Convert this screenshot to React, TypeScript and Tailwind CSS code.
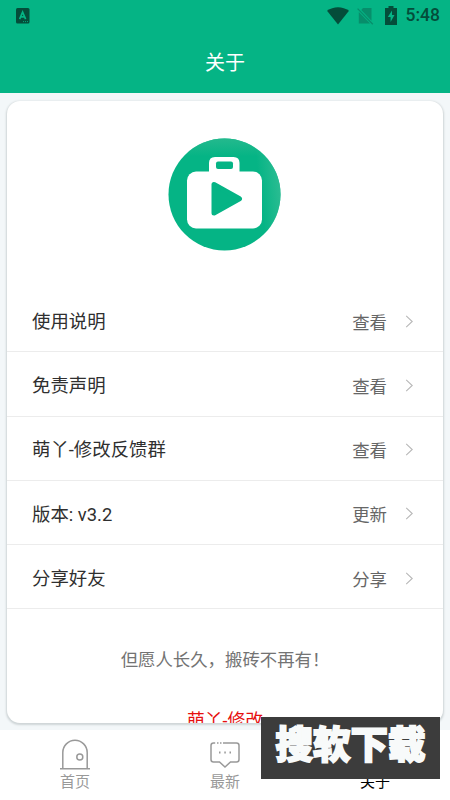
import type { ReactNode } from 'react'

type Row = { label: string; action: string }

const rows: Row[] = [
  { label: '使用说明', action: '查看' },
  { label: '免责声明', action: '查看' },
  { label: '萌丫-修改反馈群', action: '查看' },
  { label: '版本: v3.2', action: '更新' },
  { label: '分享好友', action: '分享' },
]

function StatusBar() {
  return (
    <div className="flex h-[31px] items-center pl-4 pr-[10px] text-[#044d3a]">
      <svg width="14" height="16" viewBox="0 0 14 16" className="mr-auto">
        <rect width="13.5" height="15.5" rx="1.5" fill="currentColor" />
        <path d="M3.6 11.2 6.6 4.2 9.6 11.2M4.8 8.8h3.6" fill="none" stroke="#05b485" strokeWidth="1.7" />
        <path d="M7 13.6h6" stroke="#05b485" strokeWidth="0.9" strokeDasharray="1 1" />
      </svg>
      <svg width="22" height="18" viewBox="0 0 22 18">
        <path d="M0 3.7C6.5-1 15.5-1 22 3.7L11 17.5z" fill="currentColor" />
      </svg>
      <svg width="17" height="18" viewBox="0 0 17 18" className="ml-2 text-[#078e6b]">
        <path d="M6 1h8.5v12.7L4.3 3zM1.8 5 13 16.5H1.8z" fill="currentColor" />
        <path d="M.6 1.6 15.8 17.2" stroke="currentColor" strokeWidth="1.3" />
      </svg>
      <svg width="12" height="19" viewBox="0 0 12 19" className="ml-[11px]">
        <path d="M3.5 0h5v2H12v17H0V2h3.5z" fill="currentColor" />
        <path d="M7 4.5 2.8 11h2.8v5L9.5 9H7z" fill="#05b485" />
      </svg>
      <span className="ml-[9px] font-[Roboto,sans-serif] text-[17.5px] font-medium leading-none">5:48</span>
    </div>
  )
}

function Logo() {
  return (
    <svg width="113" height="113" viewBox="0 0 113 113">
      <defs>
        <linearGradient id="right" x1="0.82" y1="0.5" x2="1" y2="0.48">
          <stop offset="0" stopColor="#2ebd93" stopOpacity="0" />
          <stop offset="1" stopColor="#2ebd93" stopOpacity="0.9" />
        </linearGradient>
        <linearGradient id="top" x1="0.5" y1="0" x2="0.5" y2="0.16">
          <stop offset="0" stopColor="#24b98d" />
          <stop offset="1" stopColor="#24b98d" stopOpacity="0" />
        </linearGradient>
      </defs>
      <circle cx="56.5" cy="56.5" r="56" fill="#05b485" />
      <circle cx="56.5" cy="56.5" r="56" fill="url(#right)" />
      <circle cx="56.5" cy="56.5" r="56" fill="url(#top)" />
      <rect x="19" y="33.5" width="75" height="57" rx="9" fill="#fff" />
      <path d="M41 36V25q0-6 6-6h18.5q6 0 6 6v11z" fill="#fff" />
      <rect x="48" y="23.5" width="17" height="7.5" rx="2" fill="#05b485" />
      <path d="M46 46.5v28.5L71.5 60.7z" fill="#05b485" stroke="#05b485" strokeWidth="5" strokeLinejoin="round" />
    </svg>
  )
}

function ListRow({ label, action }: Row) {
  return (
    <div className="flex h-[64.25px] shrink-0 items-center border-b border-[#ececec] pl-[25px] pr-[30px]">
      <span className="flex-1 pt-[4px] text-[18.4px] text-[#2f2f2f]">{label}</span>
      <span className="pt-[6px] text-[17.4px] text-[#666]">{action}</span>
      <svg width="8" height="13" viewBox="0 0 8 13" className="ml-[18px] mt-[3px]">
        <path d="M1.2.8 7.2 6.5 1.2 12.2" fill="none" stroke="#b8b8b8" strokeWidth="1.1" />
      </svg>
    </div>
  )
}

function Tab({ label, active, children }: { label: string; active?: boolean; children?: ReactNode }) {
  return (
    <div className={`flex flex-1 flex-col items-center pt-[9px] text-[15px] ${active ? 'text-black' : 'text-[#999]'}`}>
      <div className="h-[32px]">{children}</div>
      <span className="leading-[23px]">{label}</span>
    </div>
  )
}

export default function App() {
  return (
    <div className="relative flex h-[800px] w-[450px] flex-col overflow-hidden bg-[#f3f7f9] font-[Roboto,'Noto_Sans_CJK_SC',sans-serif]">
      <header className="h-[93px] shrink-0 bg-[#05b485]">
        <StatusBar />
        <h1 className="text-center text-[20px] leading-[65px] text-white">关于</h1>
      </header>

      <main className="mx-[7px] mt-2 flex h-[622px] shrink-0 flex-col overflow-hidden rounded-[13px] bg-white shadow-[0_1px_2px_0.5px_#cfd5d7]">
        <div className="flex h-[187px] shrink-0 justify-center pr-[1.5px] pt-[37px]">
          <Logo />
        </div>
        {rows.map((row) => (
          <ListRow key={row.label} {...row} />
        ))}
        <p className="mt-[38px] shrink-0 text-center text-[17.4px] leading-[26px] text-[#737373]">但愿人长久，搬砖不再有！</p>
        <p className="mt-[35px] shrink-0 text-center text-[17.8px] leading-[26px] text-[#e60f0f]">萌丫-修改</p>
      </main>

      <nav className="mt-[7px] flex flex-1 bg-white">
        <Tab label="首页">
          <svg width="30" height="31" viewBox="0 0 30 31" fill="none" stroke="#999" strokeWidth="1.5">
            <path d="M2.8 29.5V13.5a12.2 12.2 0 0 1 24.4 0v16M0 29.7h30" />
            <circle cx="19.8" cy="18" r="3" />
          </svg>
        </Tab>
        <Tab label="最新">
          <svg width="30" height="31" viewBox="0 0 30 31" fill="none" stroke="#999" strokeWidth="1.5">
            <path d="M5.2 4H3.5Q1 4 1 6.5v14Q1 23 3.500 23H9.500l5.500 5 5.500-5h6q2.500 0 2.500-2.500v-14Q29 4 26.500 4H13M7 4h1.500M10 4h1.500" />
            <path d="M9 13.500h1.500M14.300 13.500h1.500M19.500 13.500h1.500" strokeWidth="2" />
          </svg>
        </Tab>
        <Tab label="关于" active />
      </nav>

      {/* Site banner floating over the tab bar */}
      <div className="absolute left-[261px] top-[717px] flex h-[62px] w-[179px] items-center justify-center bg-[#3c3c3c] pb-[5px] text-[37.5px] font-black leading-none text-[#f8fafa] [-webkit-text-stroke:1.8px_#f8fafa]">
        搜软下载
      </div>
    </div>
  )
}
